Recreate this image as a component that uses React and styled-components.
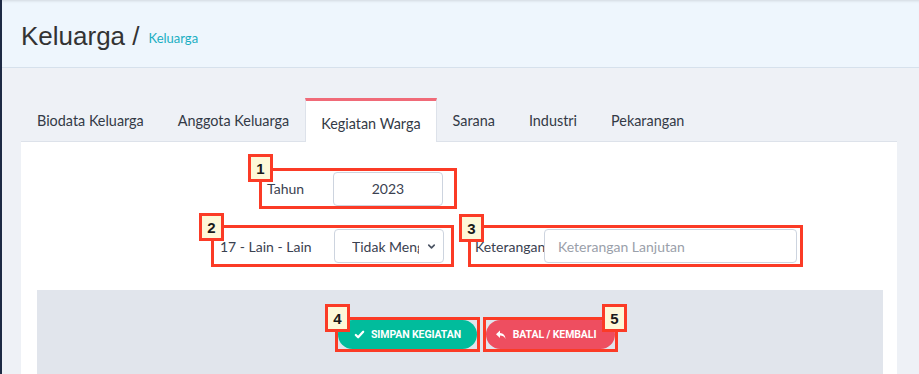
import React from 'react';
import styled, { createGlobalStyle } from 'styled-components';

const GlobalStyle = createGlobalStyle`
  html, body {
    margin: 0;
    padding: 0;
    background: #eef1f6;
    font-family: Lato, "Open Sans", sans-serif;
    color: #3d4451;
  }
  * { box-sizing: border-box; }
`;

const Page = styled.div`
  height: 374px;
  overflow: hidden;
  border-left: 2px solid #1d2a44;
  display: flex;
  flex-direction: column;
`;

const Header = styled.header`
  height: 68px;
  flex-shrink: 0;
  background: #eef6fd;
  border-bottom: 1px solid #d6e1ec;
  box-shadow: inset 0 3px 3px -2px rgba(0, 0, 0, 0.12);
  display: flex;
  align-items: center;
  padding: 5px 0 0 19px;
`;

const Title = styled.h1`
  margin: 0;
  font-family: "Liberation Sans", Arial, sans-serif;
  font-weight: 400;
  font-size: 26px;
  color: #333;
`;

const Crumb = styled.span`
  margin: 4px 0 0 9px;
  font-family: Lato, sans-serif;
  font-size: 13px;
  color: #1aaec2;
`;

const Body = styled.main`
  padding: 29px 22px 0 19px;
  flex: 1;
  display: flex;
  flex-direction: column;
`;

const Tabs = styled.nav`
  display: flex;
  align-items: flex-end;
  height: 44px;
`;

const Tab = styled.div`
  padding: 0 ${({ $active }) => ($active ? 15 : 16)}px;
  margin-right: ${({ $gap }) => $gap ?? 0}px;
  height: ${({ $active }) => ($active ? '44px' : '41px')};
  display: flex;
  align-items: center;
  padding-top: ${({ $active }) => ($active ? '3px' : '0')};
  font-size: 14.4px;
  color: #333a46;
  background: ${({ $active }) => ($active ? '#fff' : 'transparent')};
  border-top: ${({ $active }) => ($active ? '3px solid #f06a78' : '0')};
  border-left: ${({ $active }) => ($active ? '1px solid #dde2ea' : '0')};
  border-right: ${({ $active }) => ($active ? '1px solid #dde2ea' : '0')};
  margin-bottom: ${({ $active }) => ($active ? '-1px' : '0')};
  position: relative;
  z-index: 1;
`;

const Card = styled.section`
  flex: 1;
  background: #fff;
  border-top: 1px solid #dde2ea;
  padding: 0 14px 0 16px;
  display: flex;
  flex-direction: column;
`;

const Form = styled.div`
  padding: 26px 0 23px;
  display: flex;
  flex-direction: column;
  gap: 16px;
`;

const Row = styled.div`
  display: flex;
  gap: 14px;
  padding-left: ${({ $indent }) => $indent}px;
`;

const Annot = styled.div`
  position: relative;
  border: 3px solid #fb3b26;
  height: ${({ $h }) => $h}px;
  width: ${({ $w }) => $w}px;
  display: flex;
  align-items: center;
  padding-left: ${({ $pl }) => $pl ?? 5}px;
`;

const Badge = styled.span`
  position: absolute;
  left: ${({ $left }) => $left}px;
  top: ${({ $top }) => $top}px;
  width: 25px;
  height: 28px;
  background: #fdf8d8;
  border: 3px solid #fb3b26;
  display: flex;
  align-items: center;
  justify-content: center;
  font-family: "Liberation Sans", Arial, sans-serif;
  font-weight: 700;
  font-size: 15px;
  color: #1a1a1a;
  z-index: 2;
`;

const Label = styled.label`
  font-size: 14px;
  color: #3a4150;
  width: ${({ $w }) => ($w ? `${$w}px` : 'auto')};
  flex-shrink: 0;
  white-space: nowrap;
`;

const Field = styled.div`
  height: 34px;
  width: ${({ $w }) => $w}px;
  border: 1px solid #cdd4df;
  border-radius: 4px;
  display: flex;
  align-items: center;
  justify-content: ${({ $center }) => ($center ? 'center' : 'flex-start')};
  padding: 0 ${({ $pr }) => $pr ?? 13}px 0 ${({ $pl }) => $pl ?? 13}px;
  font-size: 14px;
  color: ${({ $placeholder }) => ($placeholder ? '#9aa0aa' : '#3a4150')};
  background: #fff;
`;

const SelectText = styled.span`
  flex: 1;
  overflow: hidden;
  white-space: nowrap;
  margin-right: 7px;
`;

const Chevron = () => (
  <svg width="11" height="11" viewBox="0 0 24 24" fill="none" stroke="#4a5262" strokeWidth="3.5" strokeLinecap="round" strokeLinejoin="round">
    <polyline points="6 9 12 15 18 9" />
  </svg>
);

const Footer = styled.div`
  flex: 1;
  background: #e1e5ec;
  display: flex;
  align-items: flex-start;
  padding: 27px 0 0 298px;
  gap: 3px;
`;

const ButtonBox = styled.div`
  position: relative;
  border: 3px solid #fb3b26;
  height: 35px;
  width: ${({ $w }) => $w}px;
  display: flex;
`;

const Button = styled.button`
  flex: 1;
  margin: 0;
  border: 0;
  border-radius: 15px;
  background: ${({ $variant }) => ($variant === 'save' ? '#01bc9c' : '#ee4e60')};
  color: #fff;
  font-family: Roboto, "Liberation Sans", sans-serif;
  font-weight: 700;
  font-size: 10.5px;
  letter-spacing: -0.1px;
  display: flex;
  align-items: center;
  justify-content: center;
  gap: 6px;
  padding: 0 ${({ $variant }) => ($variant === 'save' ? 0 : 10)}px 0 0;
`;

const Check = () => (
  <svg width="11" height="11" viewBox="0 0 24 24" fill="none" stroke="#fff" strokeWidth="5" strokeLinecap="round" strokeLinejoin="round">
    <polyline points="4 13 9 18 20 6" />
  </svg>
);

const Reply = () => (
  <svg width="12" height="12" viewBox="0 0 24 24" fill="#fff">
    <path d="M10 3 L2 10.5 L10 18 V13 C15 13 18.5 14.5 21 20 C20.5 12.5 17 8.3 10 8 Z" />
  </svg>
);

const tabs = [
  { label: 'Biodata Keluarga', gap: 2 },
  { label: 'Anggota Keluarga' },
  { label: 'Kegiatan Warga', active: true },
  { label: 'Sarana', gap: 2 },
  { label: 'Industri', gap: 2 },
  { label: 'Pekarangan' },
];

const App = () => {
  return (
    <>
      <GlobalStyle />
      <Page>
        <Header>
          <Title>Keluarga /</Title>
          <Crumb>Keluarga</Crumb>
        </Header>
        <Body>
          <Tabs>
            {tabs.map((t) => (
              <Tab key={t.label} $active={t.active} $gap={t.gap}>{t.label}</Tab>
            ))}
          </Tabs>
          <Card>
            <Form>
              <Row $indent={222}>
                <Annot $w={198} $h={41}>
                  <Badge $left={-14} $top={-17}>1</Badge>
                  <Label $w={66}>Tahun</Label>
                  <Field $w={110} $center>2023</Field>
                </Annot>
              </Row>
              <Row $indent={174}>
                <Annot $w={243} $h={42} $pl={6}>
                  <Badge $left={-15} $top={-15}>2</Badge>
                  <Label $w={114}>17 - Lain - Lain</Label>
                  <Field $w={110} $pl={17} $pr={6}>
                    <SelectText>Tidak Mengikuti</SelectText>
                    <Chevron />
                  </Field>
                </Annot>
                <Annot $w={335} $h={42} $pl={4}>
                  <Badge $left={-12} $top={-14}>3</Badge>
                  <Label $w={69}>Keterangan</Label>
                  <Field $w={253} $placeholder>Keterangan Lanjutan</Field>
                </Annot>
              </Row>
            </Form>
            <Footer>
              <ButtonBox $w={145}>
                <Badge $left={-13} $top={-16}>4</Badge>
                <Button $variant="save"><Check />SIMPAN KEGIATAN</Button>
              </ButtonBox>
              <ButtonBox $w={135}>
                <Badge $left={116} $top={-16}>5</Badge>
                <Button $variant="back"><Reply />BATAL / KEMBALI</Button>
              </ButtonBox>
            </Footer>
          </Card>
        </Body>
      </Page>
    </>
  );
};

export default App;
